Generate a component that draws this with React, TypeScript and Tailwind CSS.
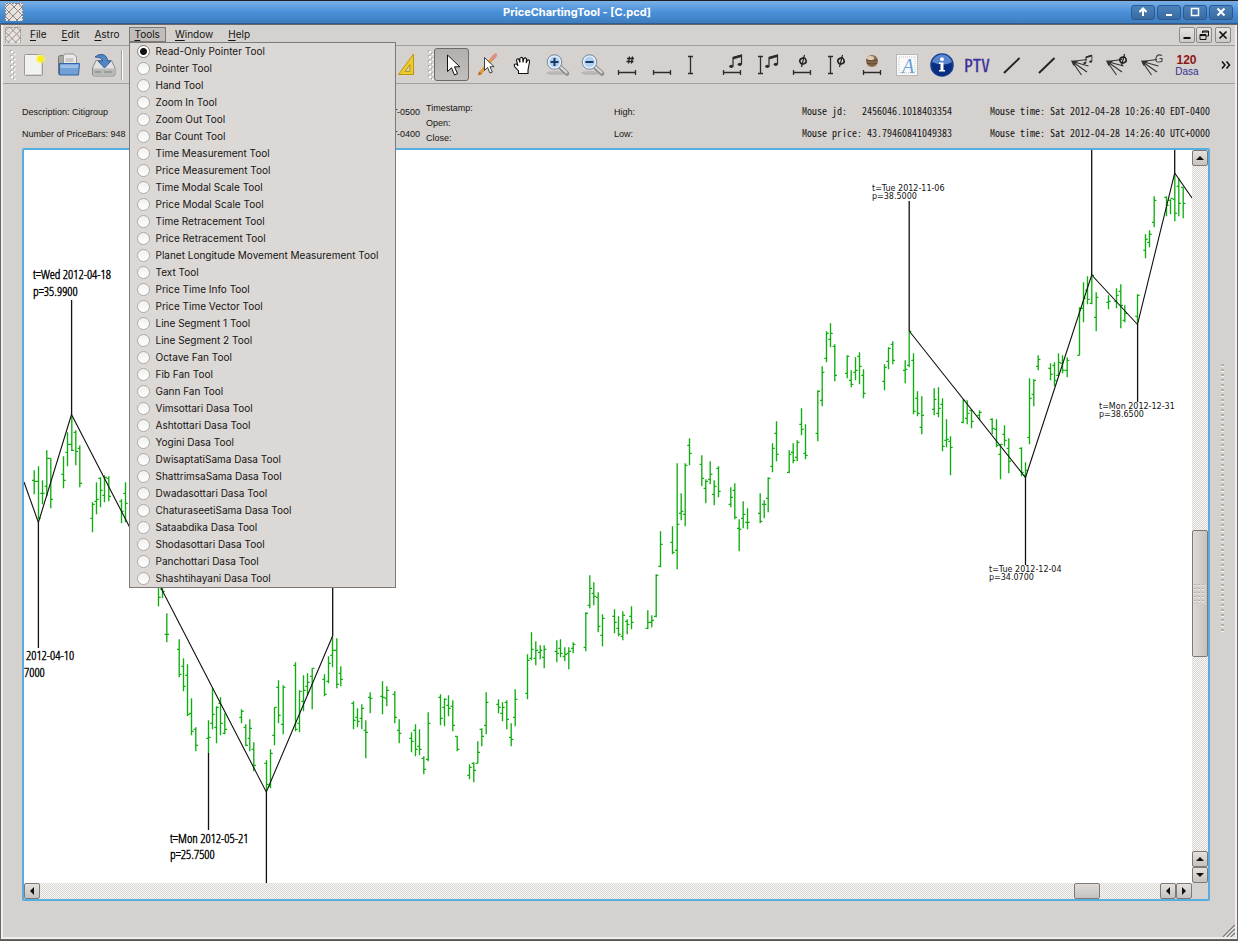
import React from 'react';

type Bar = [number, number, number, number, number];

// x, high, low, open, close
const BARS: Bar[] = [
  [34, 470, 494, 480, 481], [38.3, 466, 519, 481, 518], [42.3, 480, 504, 493, 493], [46.6, 450, 496, 486, 458], [50.6, 458, 508, 458, 499],
  [63.3, 456, 488, 474, 480], [67.3, 432, 466, 452, 444], [71.6, 416, 451, 444, 450], [75.6, 430, 465, 432, 451], [79.6, 445, 487, 448, 483],
  [92.3, 502, 532, 518, 504], [96.3, 482, 514, 501, 499], [100.3, 477, 507, 478, 490], [104.3, 475, 502, 495, 477], [108.6, 476, 501, 478, 496],
  [121.3, 499, 523, 501, 511], [125.3, 482, 522, 493, 503],
  [158.3, 575, 606, 580, 597], [162.3, 575, 598, 589, 591], [166.6, 613, 642, 634, 634],
  [179, 639, 677, 649, 674], [183.3, 658, 691, 666, 686], [187.3, 664, 716, 675, 714], [191.3, 698, 735, 713, 731], [195.6, 727, 751, 729, 745],
  [208.3, 720, 753, 738, 737], [212.3, 688, 729, 723, 714], [216.3, 706, 743, 727, 707], [220.3, 697, 735, 703, 723], [224.6, 713, 734, 733, 729],
  [241.3, 709, 723, 717, 711], [245.6, 724, 746, 727, 745], [249.6, 719, 751, 738, 728], [253.6, 742, 771, 749, 765],
  [266.3, 760, 791, 763, 784], [270.3, 749, 788, 786, 753], [274.3, 707, 745, 735, 707], [278.3, 680, 723, 687, 715], [283, 685, 734, 724, 687],
  [295.3, 662, 731, 665, 729], [299.3, 690, 732, 723, 691], [303.3, 675, 711, 701, 690], [307.3, 673, 695, 686, 682], [312, 668, 709, 676, 668],
  [324.3, 674, 696, 679, 694], [328.3, 656, 683, 681, 663], [332.3, 636, 667, 655, 650], [336.6, 638, 688, 650, 684], [340.6, 666, 686, 673, 679],
  [353.3, 701, 729, 703, 720], [357.3, 708, 727, 717, 721], [361.6, 704, 729, 718, 708], [365.6, 720, 758, 730, 732], [370, 692, 713, 697, 698],
  [382.3, 681, 714, 696, 697], [386.6, 686, 706, 698, 690], [394.6, 691, 723, 694, 717], [399, 719, 743, 730, 733],
  [411.3, 732, 752, 738, 741], [415.3, 724, 756, 730, 749], [419.3, 729, 755, 746, 749], [423.6, 756, 774, 758, 769], [428, 712, 761, 759, 723],
  [440.3, 694, 725, 697, 718], [444.3, 698, 726, 707, 699], [448.3, 695, 716, 705, 708], [452.6, 700, 731, 706, 725], [457, 736, 751, 736, 749],
  [469.3, 764, 779, 775, 767], [473.6, 762, 782, 763, 770], [477.6, 741, 763, 763, 752], [481.6, 728, 746, 729, 736], [486, 692, 734, 725, 702],
  [498.3, 699, 713, 704, 707], [502.3, 702, 721, 713, 707], [506.6, 700, 729, 702, 719], [511, 723, 746, 737, 739], [515, 689, 726, 717, 699],
  [527.3, 654, 699, 693, 660], [531.3, 632, 660, 658, 649], [535.6, 641, 665, 658, 650], [540, 645, 659, 652, 650], [544, 645, 668, 657, 649],
  [556.6, 640, 662, 651, 653], [560.3, 639, 657, 648, 653], [564.6, 647, 661, 656, 654], [568.6, 647, 669, 653, 651], [573, 642, 653, 648, 644],
  [585.6, 612, 651, 647, 613], [589.6, 575, 608, 605, 588], [593.6, 582, 605, 593, 596], [598, 592, 632, 597, 626], [602.3, 614, 646, 635, 618],
  [614.3, 609, 633, 616, 622], [618.3, 616, 636, 628, 634], [622.6, 611, 640, 636, 615], [627, 619, 634, 621, 624], [631.3, 606, 629, 616, 622],
  [647.6, 610, 629, 628, 622], [651.6, 615, 627, 622, 620], [656, 574, 617, 616, 575], [660.3, 531, 567, 566, 544],
  [672.3, 526, 554, 542, 552], [677, 463, 569, 550, 524], [681, 493, 520, 513, 511], [685, 463, 526, 514, 465], [689.3, 438, 465, 445, 453],
  [701.6, 455, 486, 464, 478], [705.6, 479, 503, 488, 481], [710, 461, 484, 479, 474], [714, 480, 505, 494, 486], [718.3, 466, 497, 468, 491],
  [730.6, 487, 507, 504, 497], [734.6, 483, 519, 490, 517], [739, 519, 551, 528, 529], [743, 501, 528, 518, 514], [747.3, 508, 529, 522, 522],
  [760, 493, 523, 513, 521], [764, 500, 518, 504, 504], [768, 477, 512, 498, 478], [772.3, 443, 472, 466, 448], [776.3, 421, 461, 433, 454],
  [789, 450, 473, 472, 454], [793, 443, 463, 452, 460], [797, 440, 461, 457, 442], [801.3, 408, 435, 424, 429], [805.3, 424, 459, 453, 455],
  [817.6, 390, 441, 433, 391], [822, 366, 406, 400, 372], [826.3, 331, 362, 358, 333], [830.3, 323, 347, 339, 333], [834.6, 344, 381, 346, 375],
  [847, 355, 378, 373, 356], [851, 370, 387, 380, 384], [855.3, 357, 380, 372, 370], [859.3, 352, 384, 356, 366], [863.3, 369, 398, 375, 393],
  [884.3, 364, 390, 381, 367], [888.3, 347, 369, 361, 348], [892.6, 341, 364, 344, 360],
  [905, 360, 383, 370, 369], [909, 331, 367, 365, 331], [913.3, 353, 414, 360, 411], [917.3, 391, 416, 398, 413], [921.6, 396, 434, 427, 415],
  [934, 388, 415, 409, 399], [938.3, 387, 417, 413, 408], [942.3, 398, 451, 404, 446], [946.3, 419, 447, 440, 439], [950.3, 436, 475, 441, 447],
  [963, 399, 423, 422, 400], [967, 400, 424, 418, 413], [971.3, 409, 428, 410, 421], [979.3, 410, 420, 415, 412],
  [992, 418, 434, 419, 428], [996.3, 419, 447, 429, 445], [1000.3, 444, 479, 454, 444], [1004.3, 425, 446, 434, 440], [1008.6, 438, 473, 448, 461],
  [1021.3, 447, 476, 448, 472], [1025.3, 462, 477, 475, 470], [1029.3, 378, 444, 437, 398], [1033.6, 379, 406, 394, 380], [1038, 355, 370, 366, 359],
  [1050.3, 363, 380, 368, 374], [1054.3, 362, 386, 365, 380], [1058.3, 353, 376, 375, 362], [1062.3, 355, 373, 363, 370], [1067, 357, 377, 370, 360],
  [1079.3, 307, 355, 355, 308], [1083.3, 282, 322, 308, 298], [1087.3, 276, 304, 290, 299], [1091.6, 275, 304, 303, 275], [1096, 292, 331, 317, 297],
  [1108.3, 295, 309, 302, 301], [1116.3, 288, 308, 301, 295], [1120.6, 284, 328, 291, 305], [1124.6, 305, 322, 320, 313],
  [1137.3, 294, 323, 316, 295], [1145.3, 234, 258, 250, 239], [1149.3, 230, 247, 242, 234], [1154, 196, 227, 222, 200],
  [1166.3, 196, 216, 197, 205], [1170.3, 199, 214, 200, 198], [1174.6, 173, 221, 199, 213], [1178.6, 178, 216, 186, 203], [1183, 187, 218, 187, 203],
];

const TOOLS = [
  'Read-Only Pointer Tool', 'Pointer Tool', 'Hand Tool', 'Zoom In Tool', 'Zoom Out Tool', 'Bar Count Tool',
  'Time Measurement Tool', 'Price Measurement Tool', 'Time Modal Scale Tool', 'Price Modal Scale Tool',
  'Time Retracement Tool', 'Price Retracement Tool', 'Planet Longitude Movement Measurement Tool', 'Text Tool',
  'Price Time Info Tool', 'Price Time Vector Tool', 'Line Segment 1 Tool', 'Line Segment 2 Tool', 'Octave Fan Tool',
  'Fib Fan Tool', 'Gann Fan Tool', 'Vimsottari Dasa Tool', 'Ashtottari Dasa Tool', 'Yogini Dasa Tool',
  'DwisaptatiSama Dasa Tool', 'ShattrimsaSama Dasa Tool', 'Dwadasottari Dasa Tool', 'ChaturaseetiSama Dasa Tool',
  'Sataabdika Dasa Tool', 'Shodasottari Dasa Tool', 'Panchottari Dasa Tool', 'Shashtihayani Dasa Tool',
];

const MONO = "font-['Noto_Sans_Mono_CJK_SC','Liberation_Mono',monospace] text-[10px] leading-[14px] whitespace-pre";
const UI = "font-['Inter','Liberation_Sans',sans-serif] text-[10px]";

function PriceChart() {
  return (
    <svg className="absolute inset-0 h-full w-full" role="img" aria-label="Price chart">
      <g transform="translate(-24 -150)">
        <g transform="translate(0.2 0.3)">
          <path
            d={BARS.map(([x, h, l, o, c]) => `M${x} ${h}V${l}M${x - 2.2} ${o}H${x}M${x} ${c}H${x + 2.2}`).join('')}
            stroke="#0fae0f" strokeWidth="1.35" fill="none"
          />
        </g>
        <g stroke="#111" strokeWidth="1.1" fill="none">
          <path d="M24 482L38.4 522.5L71.5 414.5L266.3 792L332.6 636" />
          <path d="M909.2 331L1025.5 477.5L1091.7 275L1137.5 324.5L1174.7 173L1192 198" />
          <path
            strokeWidth="1.3"
            d="M38.4 522V648M71.6 300V415M208.5 753V830M266.4 792V883M332.7 570V636M909.2 201V331M1025.5 477V565M1091.7 150V275M1137.6 324V402M1174.7 150V173"
          />
        </g>
        <g
          className="font-['Open_Sans_Condensed_Light','Open_Sans_Condensed','Liberation_Sans',sans-serif] text-[13px] font-light"
          fill="#000" stroke="#000" strokeWidth=".4"
        >
          <text x="33" y="279">t=Wed 2012-04-18</text>
          <text x="33" y="296">p=35.9900</text>
          <text x="26" y="660">2012-04-10</text>
          <text x="24" y="677">7000</text>
          <text x="170" y="843">t=Mon 2012-05-21</text>
          <text x="170" y="859">p=25.7500</text>
        </g>
        <g className="font-['DejaVu_Sans',sans-serif] text-[8px]" fill="#111">
          <text x="872" y="191">t=Tue 2012-11-06</text>
          <text x="872" y="199">p=38.5000</text>
          <text x="1099" y="409">t=Mon 2012-12-31</text>
          <text x="1099" y="417">p=38.6500</text>
          <text x="989" y="572">t=Tue 2012-12-04</text>
          <text x="989" y="580">p=34.0700</text>
        </g>
      </g>
    </svg>
  );
}

function AppLogo({ className }: { className: string }) {
  return (
    <svg viewBox="0 0 18 18" className={className} aria-hidden="true">
      <rect width="18" height="18" fill="#e6e3e0" />
      <path d="M0 5L5 0M0 13L13 0M3 18L18 3M11 18L18 11M0 5L13 18M0 13L5 18M5 0L18 13M13 0L18 5" stroke="#8a8581" strokeWidth="1" />
      <path d="M.5 18V.5H17.500V18" stroke="#8b8580" fill="none" strokeDasharray="2 1" />
      <path d="M3 5h2M12 8h2M8 14h2M14 3h1M4 13h1" stroke="#e8aaa2" />
    </svg>
  );
}

function Handle() {
  return (
    <svg width="6" height="30" viewBox="0 0 6 30" className="shrink-0" aria-hidden="true">
      {[0, 1, 2, 3, 4, 5].map((i) => (
        <g key={i}>
          <rect x="0" y={i * 5} width="2" height="2" fill="#b3aeaa" />
          <rect x="1" y={i * 5 + 1} width="2" height="2" fill="#fff" />
          <rect x="3" y={i * 5 + 2.5} width="2" height="2" fill="#b3aeaa" />
          <rect x="4" y={i * 5 + 3.5} width="1.6" height="1.6" fill="#fff" />
        </g>
      ))}
    </svg>
  );
}

function ToolButton({ label, active, children }: { label: string; active?: boolean; children: React.ReactNode }) {
  return (
    <button
      type="button"
      aria-label={label}
      aria-pressed={active}
      className={
        active
          ? 'flex h-[33px] w-[35px] shrink-0 items-center justify-center rounded-[3px] border border-[#6e6a68] bg-linear-to-b from-[#b3afac] to-[#c2bebb]'
          : 'flex h-[33px] w-[35px] shrink-0 items-center justify-center'
      }
    >
      <svg width="32" height="32" viewBox="0 0 32 32" className="shrink-0" fill="none">
        {children}
      </svg>
    </button>
  );
}

const HBar = () => <path d="M7.5 21v5M24.5 21v5M7.5 23.5h17" stroke="#2b2b2b" strokeWidth="1.3" />;
const IBeam = () => <path d="M7 7.500h5M7 24.500h5M9.500 7.500v17" stroke="#2b2b2b" strokeWidth="1.3" />;
const Notes = ({ x = 0 }: { x?: number }) => (
  <g transform={`translate(${x} 0)`}>
    <path d="M17 17V8.500L25.500 6V15" stroke="#2b2b2b" strokeWidth="1.2" />
    <path d="M17 8l8.500-2.500v2.500L17 10.500z" fill="#2b2b2b" />
    <ellipse cx="15.300" cy="17.300" rx="2.100" ry="1.600" fill="#2b2b2b" />
    <ellipse cx="23.800" cy="15.300" rx="2.100" ry="1.600" fill="#2b2b2b" />
  </g>
);
const Phi = ({ x }: { x: number }) => (
  <g stroke="#222" transform={`translate(${x} 12)`}>
    <ellipse rx="3.200" ry="3" strokeWidth="1.600" transform="rotate(-20)" />
    <path d="M1.500 -6L-1.500 6" strokeWidth="1.200" />
  </g>
);
const Fan = () => (
  <g stroke="#333">
    <path d="M6 12.500L21 10.500M6 12.500L22.500 17M6 12.500L21 23M6 12.500L15.500 26" strokeWidth="1.100" />
    <path d="M5 11.500l7 .5-4.500 5z" fill="#333" stroke="none" />
  </g>
);
const Lens = ({ plus }: { plus?: boolean }) => (
  <>
    <ellipse cx="15" cy="24" rx="10" ry="2" fill="#000" opacity=".12" />
    <path d="M19 18l7 6.500" stroke="#8d8d8a" strokeWidth="4.500" strokeLinecap="round" />
    <path d="M19.500 18l6 5.500" stroke="#dcdcda" strokeWidth="2" strokeLinecap="round" />
    <circle cx="13.500" cy="13" r="7.300" fill="#9dbde3" stroke="#7d8a9a" strokeWidth="1" />
    <circle cx="13.500" cy="13" r="6" fill="#b4d0f0" stroke="#eef5fc" strokeWidth="1.200" />
    <path d={plus ? 'M9.500 13h8M13.500 9v8' : 'M9.500 13h8'} stroke="#163a63" strokeWidth="2" />
  </>
);

const CURSOR = 'M0 0V16.500L4 12.800L7 20L10 18.700L7 11.800H12.300Z';

function FileTools() {
  return (
    <>
      <ToolButton label="New">
        <rect x="6.500" y="5.500" width="18" height="21" rx="1" fill="#f2f2f1" stroke="#9a9a96" />
        <path d="M8 25.500h15.500V7" stroke="#d5d5d2" />
        <circle cx="22.500" cy="10" r="5" fill="#f8f36a" opacity=".5" />
        <circle cx="22.500" cy="10" r="3.300" fill="#f9ee1e" />
      </ToolButton>
      <ToolButton label="Open">
        <path d="M5.500 25V8.500q0-2 2-2h4l2 2h7q2 0 2 2V25z" fill="#a6a7a3" stroke="#767773" />
        <path d="M10.500 15V7q0-2 2-2h8l3 3v8z" fill="#eaeae8" stroke="#969793" />
        <path d="M12.500 10h8M12.500 12h8" stroke="#aaa" />
        <path d="M6.500 14.500h20L25.500 26H6.500z" fill="#6fa0d6" stroke="#3465a4" />
        <path d="M7.500 15.800h18l-.5 3.200H7.500z" fill="#9cc0e8" />
      </ToolButton>
      <ToolButton label="Save">
        <path d="M4.500 19L8 11.500h15.500L27 19v6q0 2-2 2H6.500q-2 0-2-2z" fill="#e2e2e0" stroke="#888a85" />
        <path d="M5 19.500h21.500v5q0 2-2 2H7q-2 0-2-2z" fill="#b9bbb8" />
        <path d="M16.500 23h8" stroke="#6d6f6b" strokeWidth="1.500" strokeDasharray="1 1" />
        <path d="M7 23h6" stroke="#8d8f8b" strokeWidth="1.500" />
        <path d="M7 8Q10 5 14 5.500Q19 6 19.500 12H23l-6.500 7L10 12h4.500Q13.500 8 7 8z" fill="#5386c4" stroke="#2f5f9f" />
      </ToolButton>
    </>
  );
}

function ChartTools() {
  return (
    <>
      <ToolButton label="Read-only pointer" active>
        <path d={CURSOR} transform="translate(11.500 6)" fill="#fff" stroke="#111" />
      </ToolButton>
      <ToolButton label="Pointer">
        <path d="M9 24.500L23.500 7" stroke="#e79a3c" strokeWidth="3.500" />
        <path d="M21.500 9.500l3-3.500" stroke="#d98f86" strokeWidth="3.500" strokeLinecap="round" />
        <path d="M7 26.500l1-4 3 2.500z" fill="#b5651d" />
        <path d={CURSOR} transform="translate(13.500 8.500) scale(.78)" fill="#fff" stroke="#333" strokeWidth="1.200" />
      </ToolButton>
      <ToolButton label="Hand">
        <path
          d="M12.500 24.500V22L8.500 17.500Q7.500 14.500 10.500 15l1.500 2L10.500 11.500Q10.800 9 12.800 10.200L14 13.500 13.800 9.500Q15 7.500 16.700 9.200L17 13.500l.8-4Q19.500 8 20.500 10L20.200 14l1.300-3Q23.800 10.500 23.500 13L22 21v3.500z"
          fill="#fff" stroke="#111" strokeWidth="1.100"
        />
      </ToolButton>
      <ToolButton label="Zoom in"><Lens plus /></ToolButton>
      <ToolButton label="Zoom out"><Lens /></ToolButton>
      <ToolButton label="Bar count">
        <HBar />
        <path d="M18.500 7.500l-1 7M21.500 7.500l-1 7M16 9.500h7M15.500 12.500h7" stroke="#222" strokeWidth="1.300" />
      </ToolButton>
      <ToolButton label="Time measurement"><HBar /></ToolButton>
      <ToolButton label="Price measurement"><IBeam /></ToolButton>
      <ToolButton label="Time modal scale"><HBar /><Notes /></ToolButton>
      <ToolButton label="Price modal scale"><IBeam /><Notes x={1} /></ToolButton>
      <ToolButton label="Time retracement"><HBar /><Phi x={17} /></ToolButton>
      <ToolButton label="Price retracement"><IBeam /><Phi x={20} /></ToolButton>
      <ToolButton label="Planet longitude movement">
        <HBar />
        <circle cx="16" cy="12" r="6" fill="#8d6b4b" />
        <path d="M10.500 11q5.500 2 11 0M11 14q5 2 10 0" stroke="#5b4431" strokeWidth="1.200" />
        <ellipse cx="14.500" cy="9" rx="3.500" ry="2" fill="#e0cdb6" />
      </ToolButton>
      <ToolButton label="Text">
        <rect x="5.500" y="5.500" width="21" height="21" fill="#fafafa" stroke="#b8b8b6" />
        <rect x="8" y="8" width="16" height="16" stroke="#c6c6c6" strokeDasharray="1 1" />
        <text x="17" y="24" textAnchor="middle" fill="#6ba0d8" className="font-['Liberation_Serif',serif] text-[20px] italic">A</text>
      </ToolButton>
      <ToolButton label="Price time info">
        <circle cx="16" cy="16" r="11.800" fill="#163f94" />
        <circle cx="16" cy="17" r="10" fill="#0b2f80" />
        <path d="M6 13Q9 5.500 16 5.500T26 13Q21 16 16 15.500T6 13z" fill="#5b86cf" />
        <path d="M13 13.500h4.500V21H19v1.500h-6V21h1.500v-6H13z" fill="#fff" />
        <circle cx="16" cy="10.200" r="1.900" fill="#fff" />
      </ToolButton>
      <ToolButton label="Price time vector">
        <text x="16" y="23" textAnchor="middle" fill="#3a2f9c" stroke="#3a2f9c" strokeWidth=".3" className="font-['Noto_Sans_Mono_CJK_SC','Liberation_Sans',sans-serif] text-[17px]">PTV</text>
      </ToolButton>
      <ToolButton label="Line segment 1"><path d="M8 24L23.500 9" stroke="#222" strokeWidth="1.900" /></ToolButton>
      <ToolButton label="Line segment 2"><path d="M8 24L23.500 9" stroke="#222" strokeWidth="1.900" /></ToolButton>
      <ToolButton label="Octave fan">
        <Fan />
        <g transform="translate(8 2) scale(.7)"><Notes /></g>
      </ToolButton>
      <ToolButton label="Fib fan">
        <Fan />
        <g transform="translate(0 -1)"><Phi x={22} /></g>
      </ToolButton>
      <ToolButton label="Gann fan">
        <Fan />
        <path d="M26 6.500q-5-2-6 2.500t3 4q2 0 3-1V9.500h-2.500" stroke="#444" strokeWidth="1.100" />
      </ToolButton>
      <ToolButton label="Dasa">
        <text x="15.500" y="15" textAnchor="middle" fill="#8c1616" className="font-['Liberation_Sans',sans-serif] text-[12px] font-bold">120</text>
        <text x="16" y="26" textAnchor="middle" fill="#33308f" className="font-['Liberation_Sans',sans-serif] text-[10px]">Dasa</text>
      </ToolButton>
    </>
  );
}

function TitleButton({ label, children }: { label: string; children: React.ReactNode }) {
  return (
    <button type="button" aria-label={label} className="flex h-[15px] w-[24px] items-center justify-center rounded-[3px] border border-[#2a5a93] bg-linear-to-b from-[#4c83bd] to-[#386a9f]">
      <svg width="12" height="12" viewBox="0 0 12 12" fill="none" stroke="#fff" strokeWidth="2">{children}</svg>
    </button>
  );
}

function MdiButton({ label, children }: { label: string; children: React.ReactNode }) {
  return (
    <button type="button" aria-label={label} className="flex h-4 w-4 items-center justify-center rounded-[2px] border border-[#8d8987] bg-linear-to-b from-[#e6e3e1] to-[#cdc9c6]">
      <svg width="12" height="12" viewBox="0 0 12 12" fill="none" stroke="#111" className="shrink-0">{children}</svg>
    </button>
  );
}

function ScrollArrow({ label, d }: { label: string; d: string }) {
  return (
    <button type="button" aria-label={label} className="flex size-4 shrink-0 items-center justify-center rounded-[2px] border border-[#7d7977] bg-linear-to-b from-[#e4e1df] to-[#c6c2bf]">
      <svg width="8" height="8" viewBox="0 0 8 8" fill="#111"><path d={d} /></svg>
    </button>
  );
}

const TRACK = 'bg-[#f7f7f6] bg-[conic-gradient(#d9d6d3_25%,transparent_0_50%,#d9d6d3_0_75%,transparent_0)] bg-size-[2px_2px]';

function MenuLabel({ text }: { text: string }) {
  return (
    <span>
      <span className="underline underline-offset-2">{text[0]}</span>
      {text.slice(1)}
    </span>
  );
}

export default function App() {
  return (
    <div className="flex min-h-screen flex-col border-t border-b border-t-[#1d1d1f] border-b-[#565453] bg-[#d5d1ce] font-['Liberation_Sans',sans-serif] text-[#141414]">
      <header className="flex h-[23px] shrink-0 items-center border-b border-[#2c5c96] bg-linear-to-b from-[#79afe6] via-[#4a90d9] to-[#3f7dbd] pr-[5px] pl-[5px]">
        <AppLogo className="size-[18px] shrink-0" />
        <h1 className="flex-1 text-center font-['Inter','Liberation_Sans',sans-serif] text-[11px] font-bold text-white">PriceChartingTool - [C.pcd]</h1>
        <div className="flex gap-[2px]">
          <TitleButton label="Shade"><path d="M6 10V3M2.500 6L6 2.500 9.500 6" /></TitleButton>
          <TitleButton label="Minimize"><path d="M3 9h6" /></TitleButton>
          <TitleButton label="Maximize"><path d="M2.500 2.500h7v7h-7z" strokeWidth="1.500" /></TitleButton>
          <TitleButton label="Close"><path d="M2.500 2.500l7 7M9.500 2.500l-7 7" /></TitleButton>
        </div>
      </header>

      <div className="flex flex-1 flex-col border-x-[3px] border-b-[3px] border-[#efeeed] outline -outline-offset-1 outline-[#6b6867]">
        <div className={`flex h-[22px] shrink-0 items-center border-b border-[#a39f9c] pr-1 pl-[2px] ${UI}`}>
          <AppLogo className="size-4 shrink-0" />
          <nav className="flex flex-1 items-center gap-[3px] pl-[3px]">
            {['File', 'Edit', 'Astro', 'Tools', 'Window', 'Help'].map((m) =>
              m === 'Tools' ? (
                <div key={m} className="relative">
                  <button type="button" aria-expanded="true" className="block h-[15px] border border-[#7d7977] bg-[#c1bdba] px-[5px] leading-[13px]">
                    <MenuLabel text={m} />
                  </button>
                  <div className="absolute top-full left-0 z-10 w-[267px] border border-[#7d7977] bg-[#dcd8d5]">
                    {TOOLS.map((t, i) => (
                      <label key={t} className="flex h-[17px] items-center gap-[6px] pl-[7px] whitespace-nowrap">
                        <input
                          type="radio"
                          name="tool"
                          defaultChecked={i === 0}
                          className="size-[13px] shrink-0 appearance-none rounded-full border border-[#aeaaa7] bg-linear-to-b from-[#f1f0ef] to-white checked:border-[#7d7977] checked:bg-[radial-gradient(circle,#111_0_3px,#fff_4px)]"
                        />
                        <span>{t}</span>
                      </label>
                    ))}
                  </div>
                </div>
              ) : (
                <button key={m} type="button" className="h-[15px] border border-transparent px-[5px] leading-[13px]">
                  <MenuLabel text={m} />
                </button>
              ),
            )}
          </nav>
          <div className="flex gap-px">
            <MdiButton label="Minimize chart"><path d="M2.500 9h7" strokeWidth="2" /></MdiButton>
            <MdiButton label="Restore chart"><path d="M4.500 2h6v5h-2M4.500 2v2M4.500 3h6M2 5.500h6v5H2zM2 6.500h6" /></MdiButton>
            <span className="w-px" />
            <MdiButton label="Close chart"><path d="M2.500 2.500l7 7M9.500 2.500l-7 7" strokeWidth="1.700" /></MdiButton>
          </div>
        </div>

        <div className="flex h-[38px] shrink-0 items-center overflow-hidden border-b border-[#a39f9c] pl-[7px]">
          <Handle />
          <FileTools />
          <div className="h-[30px] w-[2px] shrink-0 border-l border-[#a39f9c] bg-white" />
          <div className="w-[264px] shrink-0" />
          <ToolButton label="Scale">
            <path d="M9.500 25.500L24.500 5v20.500z" fill="#eccb2e" stroke="#b8970c" />
            <path d="M16 22.500l5-7v7z" fill="#d5d1ce" stroke="#b8970c" />
          </ToolButton>
          <span className="w-[6px] shrink-0" />
          <Handle />
          <ChartTools />
          <button type="button" aria-label="More tools" className="ml-auto pr-1">
            <svg width="10" height="8" viewBox="0 0 10 8" fill="none" stroke="#111" strokeWidth="1.500"><path d="M1 .5L4 4 1 7.500M5.500 .5L8.500 4 5.500 7.500" /></svg>
          </button>
        </div>

        <div className="flex flex-1">
          <main className="flex min-w-0 flex-1 flex-col pl-[19px]">
            <section className="grid h-16 grid-cols-[404px_1fr_1fr_1fr_220px] pt-[17px] text-[9px] leading-[14px]">
              <div className="flex justify-between pt-1 pr-[6px]">
                <div className="space-y-2">
                  <p>Description: Citigroup</p>
                  <p>Number of PriceBars: 948</p>
                </div>
                <div className="space-y-2">
                  <p>EDT-0500</p>
                  <p>EDT-0400</p>
                </div>
              </div>
              <div className="leading-[15px]">
                <p>Timestamp:</p>
                <p>Open:</p>
                <p>Close:</p>
              </div>
              <div className="space-y-2 pt-1">
                <p>High:</p>
                <p>Low:</p>
              </div>
              <div className={`space-y-2 pt-[3px] ${MONO}`}>
                <p>{'Mouse jd:   2456046.1018403354'}</p>
                <p>{'Mouse price: 43.79460841049383'}</p>
              </div>
              <div className={`space-y-2 pt-[3px] ${MONO}`}>
                <p>Mouse time: Sat 2012-04-28 10:26:40 EDT-0400</p>
                <p>Mouse time: Sat 2012-04-28 14:26:40 UTC+0000</p>
              </div>
            </section>

            <section className="flex flex-1 flex-col rounded-[2px] border-2 border-[#57addf]">
              <div className="flex flex-1">
                <div className="relative flex-1 overflow-hidden bg-white">
                  <PriceChart />
                </div>
                <div className={`flex w-4 flex-col ${TRACK}`}>
                  <ScrollArrow label="Scroll up" d="M0 6L4 2l4 4z" />
                  <div className="flex-[364_1_0%]" />
                  <div className="flex flex-[125_1_0%] items-center justify-center rounded-[2px] border border-[#7d7977] bg-linear-to-r from-[#dddad7] to-[#c6c2bf]">
                    <div className="h-5 w-3 bg-[linear-gradient(90deg,transparent_2px,#d2cecb_2px),linear-gradient(#b3aeaa_1px,#f1efee_1px_2px,#d2cecb_2px)] bg-size-[4px_4px]" />
                  </div>
                  <div className="flex-[194_1_0%]" />
                  <ScrollArrow label="Page up" d="M0 6L4 2l4 4z" />
                  <ScrollArrow label="Scroll down" d="M0 2l4 4 4-4z" />
                </div>
              </div>
              <div className="flex h-4 pr-4">
                <div className={`flex flex-1 ${TRACK}`}>
                  <ScrollArrow label="Scroll left" d="M6 0L2 4l4 4z" />
                  <div className="flex-[1034_1_0%]" />
                  <div className="flex-[24_1_0%] rounded-[2px] border border-[#7d7977] bg-linear-to-b from-[#dddad7] to-[#c6c2bf]" />
                  <div className="flex-[60_1_0%]" />
                  <ScrollArrow label="Page left" d="M6 0L2 4l4 4z" />
                  <ScrollArrow label="Scroll right" d="M2 0l4 4-4 4z" />
                </div>
              </div>
            </section>
            <div className="h-[13px]" />
          </main>
          <div className="flex w-[25px] items-center justify-center">
            <div className="h-[270px] w-[3px] bg-[linear-gradient(#b3aeaa_2px,#f5f4f3_2px_3px,transparent_3px)] bg-size-[3px_5px]" />
          </div>
        </div>

        <footer className="flex h-[23px] shrink-0 items-end justify-end">
          <svg width="13" height="13" viewBox="0 0 13 13" aria-hidden="true">
            <path d="M1 13L13 1M5 13L13 5M9 13L13 9" stroke="#7d7977" strokeWidth="1.500" />
            <path d="M2.500 13L13 2.500M6.500 13L13 6.500M10.500 13L13 10.500" stroke="#fff" />
          </svg>
        </footer>
      </div>
    </div>
  );
}
